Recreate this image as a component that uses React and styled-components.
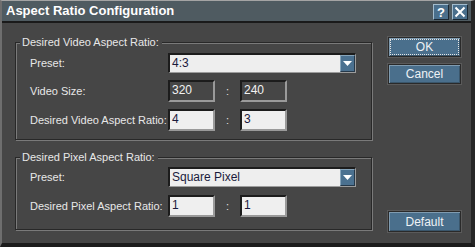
import React from 'react';
import styled, { createGlobalStyle } from 'styled-components';

const Global = createGlobalStyle`
  html, body { margin: 0; padding: 0; background: #ffffff; }
  body { font-family: "Liberation Sans", Arial, sans-serif; }
`;

const Window = styled.div`
  width: 475px;
  height: 247px;
  box-sizing: border-box;
  background: #464646;
  border-top: 1px solid #a4a4a4;
  border-left: 2px solid #6e6e6e;
  border-right: 4px solid #262626;
  border-bottom: 4px solid #1c1c1c;
  display: flex;
  flex-direction: column;
`;

const TitleBar = styled.div`
  height: 20px;
  flex: none;
  background: #4f5b61;
  border-bottom: 2px solid #1a1a1a;
  display: flex;
  align-items: flex-start;
  padding: 0 3px 0 4px;
`;

const Title = styled.div`
  flex: 1;
  color: #ffffff;
  font-weight: bold;
  font-size: 13px;
  line-height: 20px;
  white-space: nowrap;
`;

const TitleButtons = styled.div`
  display: flex;
  gap: 3px;
  padding-top: 3px;
`;

const TitleButton = styled.div`
  width: 16px;
  height: 16px;
  box-sizing: border-box;
  background: #4a6f8c;
  border: 1px solid;
  border-color: #a3bccd #1c2832 #1c2832 #a3bccd;
  display: flex;
  align-items: center;
  justify-content: center;
  color: #ffffff;
  font-weight: bold;
  font-size: 13px;
  line-height: 1;
`;

const Body = styled.div`
  flex: 1;
  display: flex;
  padding: 0 0 11px 13px;
`;

const LeftColumn = styled.div`
  width: 357px;
  padding-top: 19px;
  display: flex;
  flex-direction: column;
`;

const GroupBox = styled.div`
  box-sizing: border-box;
  border: 1px solid #282828;
  box-shadow: inset 1px 1px 0 #7a7a7a, 1px 1px 0 #7a7a7a;
  margin-top: ${p => p.$gap || 0}px;
  padding: 0 14px ${p => p.$bottom}px 14px;
`;

const Legend = styled.div`
  width: fit-content;
  margin: -7px 0 0 -10px;
  padding: 0 3px 0 2px;
  background: #464646;
  color: #e8e8e8;
  font-size: 11px;
  line-height: 13px;
  white-space: nowrap;
`;

const FormGrid = styled.div`
  display: grid;
  grid-template-columns: 138px 47px 25px 47px 69px;
  grid-auto-rows: 22px;
  grid-template-rows: 20px;
  row-gap: ${p => p.$gap}px;
  align-items: center;
  margin-top: ${p => p.$top}px;
`;

const Label = styled.div`
  color: #e8e8e8;
  font-size: 11px;
  white-space: nowrap;
`;

const Combo = styled.div`
  grid-column: 2 / 6;
  height: 20px;
  box-sizing: border-box;
  background: #eeeeee;
  border-top: 2px solid #1c1c1c;
  border-left: 2px solid #1c1c1c;
  border-bottom: 1px solid #9c9c9c;
  border-right: 1px solid #9c9c9c;
  display: flex;
  align-items: stretch;
`;

const ComboText = styled.div`
  flex: 1;
  color: #1a1a3c;
  font-size: 12px;
  line-height: 17px;
  padding-left: 2px;
`;

const DropButton = styled.div`
  width: 15px;
  box-sizing: border-box;
  background: #4b7190;
  border: 1px solid;
  border-color: #86a4ba #26394a #26394a #86a4ba;
  display: flex;
  align-items: center;
  justify-content: center;
`;

const Field = styled.div`
  height: 22px;
  box-sizing: border-box;
  background: ${p => (p.$disabled ? '#464646' : '#efefef')};
  color: ${p => (p.$disabled ? '#f2f2f2' : '#1a1a3c')};
  border-top: 2px solid #1c1c1c;
  border-left: 2px solid #1c1c1c;
  border-bottom: 2px solid #9a9a9a;
  border-right: 2px solid #9a9a9a;
  font-size: 12px;
  line-height: 14px;
  padding: 1px 0 0 2px;
`;

const Colon = styled.div`
  color: #e0e0e0;
  font-size: 11px;
  text-align: center;
`;

const RightColumn = styled.div`
  width: 73px;
  margin-left: 16px;
  padding-top: 14px;
  display: flex;
  flex-direction: column;
`;

const Button = styled.div`
  height: ${p => p.$h || 20}px;
  box-sizing: border-box;
  margin-top: ${p => (p.$auto ? 'auto' : `${p.$mt || 0}px`)};
  background: #4a6f8c;
  border: 1px solid #2a2a2a;
  box-shadow: inset 1px 1px 0 #7f9bb0, inset -1px -1px 0 #3a566b, 0 0 0 1px #5a5a5a;
  color: #eef2f6;
  font-size: 12px;
  display: flex;
  align-items: center;
  justify-content: center;
  outline: ${p => (p.$focus ? '1px dotted #e6e6e6' : 'none')};
  outline-offset: -3px;
`;

export default function App() {
  return (
    <>
      <Global />
      <Window>
        <TitleBar>
          <Title>Aspect Ratio Configuration</Title>
          <TitleButtons>
            <TitleButton>?</TitleButton>
            <TitleButton>
              <svg width="12" height="12" viewBox="0 0 12 12">
                <path d="M1.5 1.5 L10.5 10.5 M10.5 1.5 L1.5 10.5" stroke="#ffffff" strokeWidth="2" />
              </svg>
            </TitleButton>
          </TitleButtons>
        </TitleBar>
        <Body>
          <LeftColumn>
            <GroupBox $bottom={8}>
              <Legend>Desired Video Aspect Ratio:</Legend>
              <FormGrid $gap={7} $top={4}>
                <Label>Preset:</Label>
                <Combo>
                  <ComboText>4:3</ComboText>
                  <DropButton>
                    <svg width="9" height="5" viewBox="0 0 9 5">
                      <path d="M0 0 H9 L4.5 5 Z" fill="#ffffff" />
                    </svg>
                  </DropButton>
                </Combo>
                <Label>Video Size:</Label>
                <Field $disabled>320</Field>
                <Colon>:</Colon>
                <Field $disabled>240</Field>
                <div />
                <Label>Desired Video Aspect Ratio:</Label>
                <Field>4</Field>
                <Colon>:</Colon>
                <Field>3</Field>
                <div />
              </FormGrid>
            </GroupBox>
            <GroupBox $gap={17} $bottom={12}>
              <Legend>Desired Pixel Aspect Ratio:</Legend>
              <FormGrid $gap={8} $top={3}>
                <Label>Preset:</Label>
                <Combo>
                  <ComboText>Square Pixel</ComboText>
                  <DropButton>
                    <svg width="9" height="5" viewBox="0 0 9 5">
                      <path d="M0 0 H9 L4.5 5 Z" fill="#ffffff" />
                    </svg>
                  </DropButton>
                </Combo>
                <Label>Desired Pixel Aspect Ratio:</Label>
                <Field>1</Field>
                <Colon>:</Colon>
                <Field>1</Field>
                <div />
              </FormGrid>
            </GroupBox>
          </LeftColumn>
          <RightColumn>
            <Button $focus>OK</Button>
            <Button $mt={7}>Cancel</Button>
            <Button $auto $h={21}>Default</Button>
          </RightColumn>
        </Body>
      </Window>
    </>
  );
}
